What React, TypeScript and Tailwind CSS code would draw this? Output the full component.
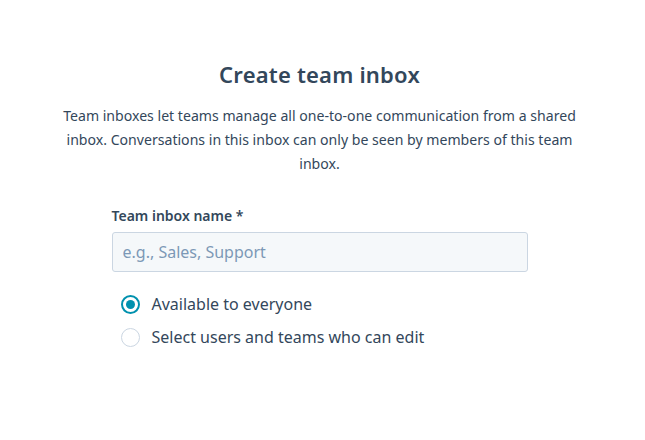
import { useState } from "react";

export default function App() {
    const [access, setAccess] = useState("everyone");
    const options = [
        { value: "everyone", label: "Available to everyone" },
        { value: "select", label: "Select users and teams who can edit" },
    ];
    return (
        <div
            className="w-[645px] h-[440px] bg-white text-[#33475b] flex flex-col items-center pr-[6px]"
            style={{ fontFamily: "'Noto Sans', 'Open Sans', sans-serif" }}
        >
            <h1 className="mt-[58px] text-[22px] leading-[32px] font-semibold tracking-[0.2px]">Create team inbox</h1>
            <p className="mt-[14px] w-[522px] text-center text-[14.1px] leading-[24px]">
                Team inboxes let teams manage all one-to-one communication from a shared inbox. Conversations in this inbox can only be seen by members of this team inbox.
            </p>
            <div className="mt-[30px] w-[416px]">
                <label className="block text-[14px] leading-[20px] font-semibold mb-[6px]">Team inbox name *</label>
                <input
                    placeholder="e.g., Sales, Support"
                    className="w-full h-[40px] rounded-[3px] border border-[#cbd6e2] bg-[#f5f8fa] px-[10px] text-[16px] text-[#33475b] placeholder:text-[#7c98b6] outline-none"
                />
                <div className="mt-[22px] flex flex-col gap-[13px] pl-[9px]">
                    {options.map((o) => (
                        <label key={o.value} className="flex items-center gap-[12px] cursor-pointer text-[16px] leading-[20px]">
                            <span
                                className={
                                    access === o.value
                                        ? "w-[19px] h-[19px] rounded-full border-2 border-[#0091ae] flex items-center justify-center"
                                        : "w-[19px] h-[19px] rounded-full border border-[#cbd6e2] bg-white"
                                }
                                onClick={() => setAccess(o.value)}
                            >
                                {access === o.value && <span className="w-[9px] h-[9px] rounded-full bg-[#0091ae]" />}
                            </span>
                            {o.label}
                        </label>
                    ))}
                </div>
            </div>
        </div>
    );
}
